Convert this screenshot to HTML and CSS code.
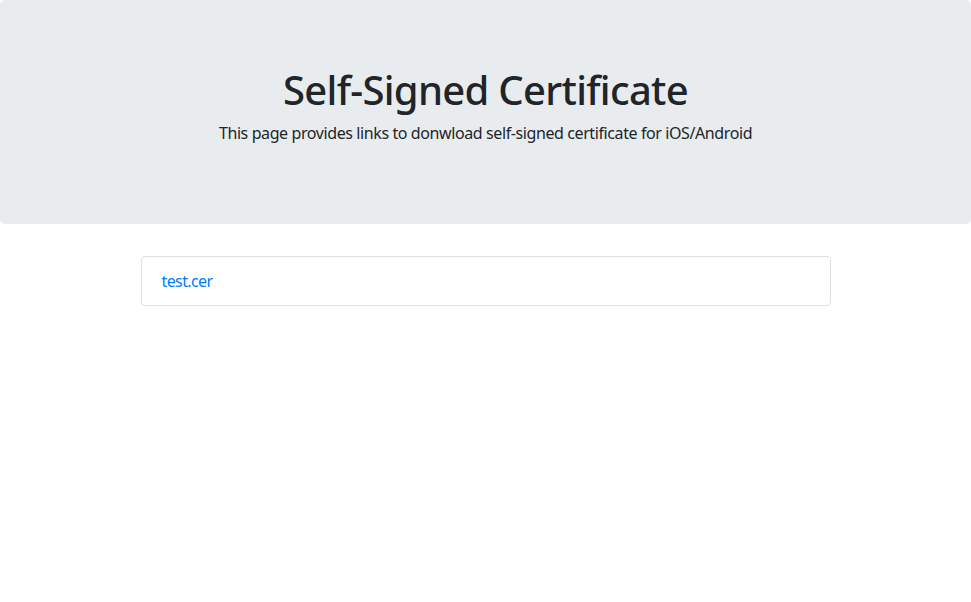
FILE: index.html
```html
<!DOCTYPE html>
<html lang="en">
<head>
<meta charset="utf-8">
<title>Self-Signed Certificate</title>
<link rel="stylesheet" href="styles.css">
</head>
<body>
<div class="jumbotron">
  <h1 class="title">Self-Signed Certificate</h1>
  <p class="lead">This page provides links to donwload self-signed certificate for iOS/Android</p>
</div>
<div class="container">
  <ul class="list-group">
    <li class="list-item"><a href="#" class="file-link">test.cer</a></li>
  </ul>
</div>
</body>
</html>
```
FILE: styles.css
```css
* { box-sizing: border-box; }
body {
  margin: 0;
  font-family: "Noto Sans", "Open Sans", sans-serif;
  font-size: 16px;
  line-height: 1.5;
  letter-spacing: -0.4px;
  color: #212529;
  background: #fff;
}
.jumbotron {
  background: #e9ecef;
  padding: 66px 32px 63px;
  border-radius: 4.8px;
  margin-bottom: 32px;
  text-align: center;
}
.title {
  margin: 0 0 7px;
  font-size: 40px;
  font-weight: 500;
  line-height: 1.2;
  letter-spacing: -0.7px;
}
.lead {
  margin: 0 0 16px;
}
.container {
  max-width: 720px;
  margin: 0 auto;
  padding: 0 15px;
}
.list-group {
  list-style: none;
  margin: 0;
  padding: 0;
}
.list-item {
  padding: 12px 20px;
  border: 1px solid rgba(0,0,0,.125);
  border-radius: 4px;
}
.file-link {
  color: #007bff;
  text-decoration: none;
  letter-spacing: -0.6px;
}
```
